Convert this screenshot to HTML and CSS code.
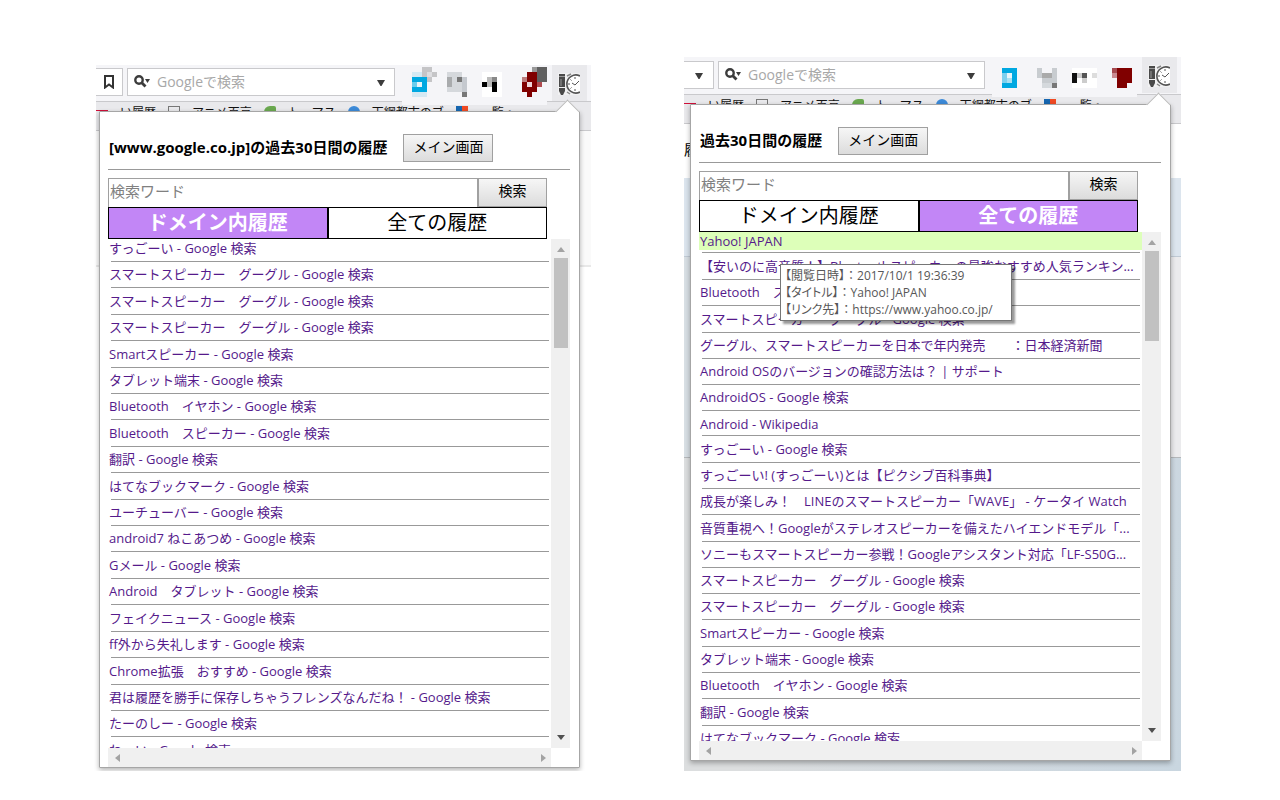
FILE: index.html
```
<!DOCTYPE html>
<html lang="ja">
<head>
<meta charset="utf-8">
<title>履歴</title>
<link rel="stylesheet" href="styles.css">
</head>
<body>
<svg class="defs" aria-hidden="true">
  <symbol id="magnifier" viewBox="0 0 18 14"><circle cx="6" cy="5" r="3.7" fill="none" stroke="#3c3c3c" stroke-width="2.4"/><path d="M8.5 7.5l4 4" stroke="#3c3c3c" stroke-width="2.8"/><path d="M12 4h5l-2.500 4z" fill="#3c3c3c"/></symbol>
  <symbol id="down" viewBox="0 0 10 7"><path d="M1 1h8L5.500 7h-1z" fill="#3c3c3c"/></symbol>
  <symbol id="penclock" viewBox="0 0 22 22">
    <rect width="22" height="22" fill="#f1f1f2"/>
    <path d="M1 1h6v13H1zM1 15h6v3l-2 4H3l-2-4z" fill="#4a4a4a"/><path d="M1 3.500h6M3 6v7" stroke="#999"/>
    <path d="M22 2.500A9 9 0 1 0 22 19.500z" fill="#fff"/><path d="M22 3A9 9 0 1 0 22 19" fill="none" stroke="#555" stroke-width="1.600"/>
    <path d="M17 4v2M10 11h2M17 16v2M12.500 6.500l1 1M12.500 15.500l1-1M21 8l-4 4-3-2" stroke="#555" fill="none"/>
    <path d="M9 3l4-2M9 19l3 2" stroke="#888" stroke-width="1.500"/>
  </symbol>
</svg>
<main class="board">
  <section class="screen">
    <div class="backdrop">
      <div class="toolbar">
        <button class="tool-btn mark" aria-label="ブックマーク"><svg width="10" height="14" viewBox="0 0 10 14"><path d="M1 1h8v11.500L5 9.500l-4 3z" fill="none" stroke="#333" stroke-width="2"/></svg></button>
        <div class="omni"><svg width="18" height="14"><use href="#magnifier"/></svg><input aria-label="Googleで検索" placeholder="Googleで検索"><svg width="10" height="7"><use href="#down"/></svg></div>
        <div class="extensions">
          <svg width="145" height="40" viewBox="0 0 145 40" shape-rendering="crispEdges">
            <path d="M10 5h15v5H10zM10 25h15v5H10z" fill="#d5e9f3"/><path d="M10 10h15v15H10z" fill="#00a8e1"/><path d="M10 15h5v5h-5z" fill="#6ccdec"/><path d="M15 15h5v5h-5z" fill="#e8f5fa"/>
            <path d="M20 0h10v5h5v5h-5v5h-5v-5h-5z" fill="#c5c5c7"/><path d="M25 5h5v5h-5z" fill="#dddde0"/>
            <path d="M45 5h15v20H45z" fill="#d5d8dc"/><path d="M45 10h5v10h-5zM55 10h5v5h-5zM60 15h5v5h-5z" fill="#a9abad"/><path d="M55 10h5v5h-5zM60 25h5v5h-5z" fill="#777"/><path d="M60 10h5v15h-5z" fill="#c5c9cf"/>
            <path d="M80 5h20v25H80z" fill="#fff"/><path d="M80 15h5v5h-5zM90 15h5v10h-5z" fill="#000"/><path d="M85 10h5v10h-5z" fill="#bbb"/><path d="M90 10h5v5h-5z" fill="#888"/>
            <path d="M125 5h10v20h-5v5h-5v-5h-5V10h5z" fill="#800000"/><path d="M120 10h5v5h-5z" fill="#bd7e7e"/><path d="M125 15h5v5h-5z" fill="#eed5d9"/><path d="M130 0h15v15h-10V5h-5z" fill="#606060"/><path d="M130 0h5v5h-5z" fill="#999"/><path d="M135 15h5v5h-5z" fill="#b04b50"/>
          </svg>
        </div>
        <button class="ext-btn" aria-label="履歴"><svg width="22" height="22"><use href="#penclock"/></svg></button>
      </div>
      <div class="bookmarks"><i class="red"></i><span>い履歴</span><i class="page"></i><span>アニメ百京</span><i class="green"></i><span>トーマス</span><i class="blue"></i><span>天網都市のブ</span><i class="tiles"></i><span>一覧・一</span></div>
      <div class="page-white"></div>
    </div>
    <div class="popup">
      <header class="head"><h1>[www.google.co.jp]の過去30日間の履歴</h1><button class="btn main-btn">メイン画面</button></header>
      <form class="search"><input aria-label="検索ワード" placeholder="検索ワード"><button type="button" class="btn">検索</button></form>
      <nav class="tabs"><button class="tab active">ドメイン内履歴</button><button class="tab">全ての履歴</button></nav>
      <div class="scroller">
        <div class="view"><ul class="list">
          <li><a href="#">すっごーい - Google 検索</a></li>
          <li><a href="#">スマートスピーカー　グーグル - Google 検索</a></li>
          <li><a href="#">スマートスピーカー　グーグル - Google 検索</a></li>
          <li><a href="#">スマートスピーカー　グーグル - Google 検索</a></li>
          <li><a href="#">Smartスピーカー - Google 検索</a></li>
          <li><a href="#">タブレット端末 - Google 検索</a></li>
          <li><a href="#">Bluetooth　イヤホン - Google 検索</a></li>
          <li><a href="#">Bluetooth　スピーカー - Google 検索</a></li>
          <li><a href="#">翻訳 - Google 検索</a></li>
          <li><a href="#">はてなブックマーク - Google 検索</a></li>
          <li><a href="#">ユーチューバー - Google 検索</a></li>
          <li><a href="#">android7 ねこあつめ - Google 検索</a></li>
          <li><a href="#">Gメール - Google 検索</a></li>
          <li><a href="#">Android　タブレット - Google 検索</a></li>
          <li><a href="#">フェイクニュース - Google 検索</a></li>
          <li><a href="#">ff外から失礼します - Google 検索</a></li>
          <li><a href="#">Chrome拡張　おすすめ - Google 検索</a></li>
          <li><a href="#">君は履歴を勝手に保存しちゃうフレンズなんだね！ - Google 検索</a></li>
          <li><a href="#">たーのしー - Google 検索</a></li>
          <li><a href="#">わーい - Google 検索</a></li>
        </ul></div>
        <div class="vbar"><i class="up"></i><b></b><i class="dn"></i></div>
        <div class="hbar"><i class="lf"></i><i class="rt"></i></div>
      </div>
    </div>
  </section>

  <section class="screen second">
    <div class="backdrop">
      <div class="toolbar">
        <button class="tool-btn" aria-label="開く"><svg width="10" height="7"><use href="#down"/></svg></button>
        <div class="omni"><svg width="18" height="14"><use href="#magnifier"/></svg><input aria-label="Googleで検索" placeholder="Googleで検索"><svg width="10" height="7"><use href="#down"/></svg></div>
        <div class="extensions">
          <svg width="145" height="40" viewBox="0 0 145 40" shape-rendering="crispEdges">
            <path d="M10 10h15v20H10z" fill="#00a8e1"/><path d="M10 15h5v10h-5z" fill="#7dd0ee"/><path d="M15 15h5v5h-5z" fill="#e8f5fa"/><path d="M15 20h5v5h-5z" fill="#a8e0f2"/>
            <path d="M45 10h5v5h10v-5h5v15H50v-5h-5z" fill="#c8ccd0"/><path d="M50 15h5v5h-5zM55 15h5v5h-5z" fill="#aaa"/><path d="M50 25h10v5H50z" fill="#d5d9dd"/><path d="M60 25h5v5h-5z" fill="#777"/>
            <path d="M80 10h25v20H80z" fill="#fff"/><path d="M80 15h5v10h-5z" fill="#111"/><path d="M85 15h5v5h-5zM90 20h5v5h-5z" fill="#ccc"/><path d="M90 15h5v5h-5z" fill="#555"/><path d="M100 15h5v5h-5z" fill="#ddd"/>
            <path d="M120 10h20v15h-5v5h-10v-10h-5z" fill="#800000"/><path d="M120 10h5v5h-5z" fill="#a54a50"/><path d="M120 15h5v5h-5z" fill="#c98a90"/>
          </svg>
        </div>
        <button class="ext-btn" aria-label="履歴"><svg width="22" height="22"><use href="#penclock"/></svg></button>
      </div>
      <div class="bookmarks"><i class="red"></i><span>い履歴</span><i class="page"></i><span>アニメ百京</span><i class="green"></i><span>トーマス</span><i class="blue"></i><span>天網都市のブ</span><i class="tiles"></i><span>一覧・一</span></div>
      <div class="page-white">履</div>
      <div class="page-sky"></div>
      <div class="page-gray"></div>
      <div class="page-rest"></div>
    </div>
    <div class="popup">
      <header class="head"><h1>過去30日間の履歴</h1><button class="btn main-btn">メイン画面</button></header>
      <form class="search"><input aria-label="検索ワード" placeholder="検索ワード"><button type="button" class="btn">検索</button></form>
      <nav class="tabs"><button class="tab">ドメイン内履歴</button><button class="tab active">全ての履歴</button></nav>
      <div class="scroller">
        <div class="view"><ul class="list">
          <li class="compact hover"><a href="#">Yahoo! JAPAN</a></li>
          <li><a href="#">【安いのに高音質！】Bluetoothスピーカーの最強おすすめ人気ランキン...</a></li>
          <li><a href="#">Bluetooth　スピーカー - Google 検索</a></li>
          <li><a href="#">スマートスピーカー　グーグル - Google 検索</a></li>
          <li><a href="#">グーグル、スマートスピーカーを日本で年内発売　　：日本経済新聞</a></li>
          <li><a href="#">Android OSのバージョンの確認方法は？ | サポート</a></li>
          <li><a href="#">AndroidOS - Google 検索</a></li>
          <li class="compact"><a href="#">Android - Wikipedia</a></li>
          <li><a href="#">すっごーい - Google 検索</a></li>
          <li><a href="#">すっごーい! (すっごーい)とは【ピクシブ百科事典】</a></li>
          <li><a href="#">成長が楽しみ！　LINEのスマートスピーカー「WAVE」 - ケータイ Watch</a></li>
          <li><a href="#">音質重視へ！Googleがステレオスピーカーを備えたハイエンドモデル「...</a></li>
          <li><a href="#">ソニーもスマートスピーカー参戦！Googleアシスタント対応「LF-S50G...</a></li>
          <li><a href="#">スマートスピーカー　グーグル - Google 検索</a></li>
          <li><a href="#">スマートスピーカー　グーグル - Google 検索</a></li>
          <li><a href="#">Smartスピーカー - Google 検索</a></li>
          <li><a href="#">タブレット端末 - Google 検索</a></li>
          <li><a href="#">Bluetooth　イヤホン - Google 検索</a></li>
          <li><a href="#">翻訳 - Google 検索</a></li>
          <li><a href="#">はてなブックマーク - Google 検索</a></li>
        </ul></div>
        <div class="vbar"><i class="up"></i><b></b><i class="dn"></i></div>
        <div class="hbar"><i class="lf"></i><i class="rt"></i></div>
        <div class="tooltip" role="tooltip"><span>【閲覧日時】</span>：2017/10/1 19:36:39<br><span>【タイトル】</span>：Yahoo! JAPAN<br><span>【リンク先】</span>：https://www.yahoo.co.jp/</div>
      </div>
    </div>
  </section>
</main>
</body>
</html>
```
FILE: styles.css
```
* { box-sizing: border-box; }
body {
  margin: 0;
  background: #fff;
  font-family: "Open Sans", "Noto Sans CJK JP", sans-serif;
  font-size: 13px;
}
button, input { font: inherit; margin: 0; padding: 0; border: 0; border-radius: 0; min-width: 0; }
ul, h1 { margin: 0; padding: 0; }
.defs { display: none; }
.board {
  display: grid;
  grid-template-columns: 495fr 497fr;
  gap: 93px;
  padding: 57px 99px 0 96px;
  align-items: start;
}
.screen { position: relative; padding: 46px 11px 0 3px; margin-top: 8px; }
.second { margin-top: 0; padding: 47px 10px 10px 6px; }

/* browser chrome behind the popup */
.backdrop { position: absolute; inset: 0; display: flex; flex-direction: column; overflow: hidden; }
.toolbar { display: flex; flex: 0 0 37px; min-height: 0; background: #f5f5f8; border-bottom: 1px solid #c9c9cc; }
.second .toolbar { flex-basis: 38px; }
.tool-btn {
  display: flex; align-items: center; justify-content: center;
  width: 27px; height: 28px; margin: 3px 4px 0 0;
  background: #fff; border: 1px solid #c9c9cc; border-left: 0;
}
.second .tool-btn { width: 30px; margin-top: 4px; }
.omni {
  display: flex; align-items: center; flex: 1;
  height: 28px; margin-top: 3px; padding: 0 8px 0 5px;
  background: #fff; border: 1px solid #c9c9cc;
}
.second .omni { margin-top: 4px; }
.omni input { flex: 1; padding: 0 0 2px 6px; background: none; font-size: 14px; }
.omni input::placeholder { color: #a8a8a8; }
.extensions { width: 145px; height: 40px; margin-left: 7px; padding-top: 2px; background: #f5f5f8; z-index: 1; }
.second .extensions { padding-top: 1px; }
.ext-btn { width: 35px; height: 36px; margin: 0 4px 0 5px; padding: 5px 0 0 6px; background: #e9e9ec; text-align: left; }
.bookmarks {
  display: flex; flex: 0 0 29px; align-items: flex-start; gap: 12px;
  padding: 4px 0 0; overflow: hidden; white-space: nowrap;
  background: #e9e9ec; border-bottom: 1px solid #c9c9cc;
  color: #111; font-size: 12px; line-height: 14px;
}
.bookmarks i { flex: none; width: 12px; height: 12px; }
.red { border-top: 1px solid #d0103a; margin-top: 4px; }
.page { border: 1px solid #777; }
.green { background: #6aa84f; border-radius: 6px 2px; }
.blue { background: #3c8ad8; border-radius: 50%; }
.tiles { background: linear-gradient(90deg, #1666b0 50%, #f04a23 50%); }
.page-white { flex: 0 0 136px; background: #fafafa; border-bottom: 2px solid #e8e8e8; }
.second .page-white { flex-basis: 54px; padding-top: 16px; background: #fff; font-size: 14px; line-height: 20px; border: 0; }
.page-sky { flex: 0 0 79px; background: #dce5ee; border-bottom: 1px solid #c0cad4; }
.page-gray { flex: 0 0 201px; background: linear-gradient(90deg, #d8dfe4 50%, #ebebed 50%); border-bottom: 1px solid #b4b7ba; }
.page-rest { flex: 1; background: linear-gradient(100deg, #dcdedf 20%, #c9d6e0); }

/* popup */
.popup {
  position: relative;
  padding: 22px 9px 0 8px;
  background: #fff;
  border: 1px solid #a6a6a6;
  border-radius: 1px;
  box-shadow: 0 2px 5px rgba(0, 0, 0, .3);
}
.popup::before {
  content: ""; position: absolute; top: -9px; right: 3px;
  width: 16px; height: 16px; background: #fff;
  border: 1px solid #bbb; border-width: 1px 0 0 1px; transform: rotate(45deg);
}
.popup > * { position: relative; }
.head { display: flex; align-items: flex-start; gap: 16px; height: 36px; border-bottom: 1px solid #999; white-space: nowrap; }
.head h1 { font-size: 15px; line-height: 26px; padding-left: 1px; }
.btn { background: linear-gradient(#f6f6f6, #dcdcdc); border: 1px solid #a0a0a0; color: #000; font-size: 14px; line-height: 20px; }
.main-btn { width: 90px; height: 28px; padding-bottom: 2px; }
.search { display: flex; margin: 8px 23px 0 0; height: 29px; }
.search input { flex: 1; padding: 0 1px 4px; border: 1px solid #a0a0a0; border-bottom: 0; font-size: 15px; }
.search input::placeholder { color: #808080; }
.search .btn { width: 69px; padding-bottom: 3px; }
.tabs { display: flex; margin-right: 23px; }
.tab { flex: 1; height: 32px; background: #fff; border: 1px solid #000; color: #000; font-size: 20px; line-height: 28px; }
.tab.active { background: #c286f6; color: #fff; font-weight: 700; }
.scroller { display: grid; grid-template: 509px 19px / 1fr 19px; }
.view { overflow: hidden; }
.list { display: flex; flex-direction: column; height: 528px; list-style: none; }
.second .list { height: 523px; }
.list li { flex: 1; min-height: 0; }
.list .compact { flex: 0 0 25px; }
.list a { display: block; height: 18px; padding-left: 1px; overflow: hidden; white-space: nowrap; color: #551a8b; text-decoration: none; line-height: 18px; }
.list li::after { content: ""; display: block; margin: 4px 2px 0 3px; border-top: 1px solid #999; }
.list .compact::after { margin-top: 2px; }
.list .hover a { background: #ddffb9; }
.vbar { display: flex; flex-direction: column; align-items: center; background: #f0f0f0; }
.vbar b { width: 14px; height: 90px; margin: 6px 0 auto; background: #c1c1c1; }
.hbar { display: flex; justify-content: space-between; align-items: center; padding: 0 5px 0 7px; background: #f0f0f0; }
.up, .dn { border: 4px solid transparent; border-top: 0; border-bottom: 5px solid #a3a3a3; margin-top: 8px; }
.dn { border-bottom: 0; border-top: 5px solid #505050; margin: 0 0 8px; }
.lf, .rt { border: 4px solid transparent; border-left: 0; border-right: 5px solid #a3a3a3; }
.rt { border-right: 0; border-left: 5px solid #a3a3a3; }
.tooltip {
  position: absolute; left: 81px; top: 32px;
  width: 232px; padding: 2px 4px;
  background: #fff; border: 1px solid #767676; box-shadow: 3px 3px 2px rgba(0, 0, 0, .4);
  color: #575757; font-size: 12px; line-height: 17px; white-space: nowrap;
}
.tooltip span { font-feature-settings: "palt"; }
```
